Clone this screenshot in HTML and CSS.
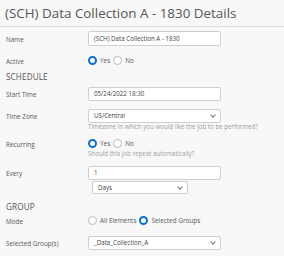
FILE: index.html
```html
<!DOCTYPE html>
<html lang="en">
<head>
  <meta charset="UTF-8">
  <title>(SCH) Data Collection A - 1830 Details</title>
  <link rel="stylesheet" href="styles.css">
</head>
<body>
  <div class="header">(SCH) Data Collection A - 1830 Details</div>

  <div class="form">
    <div class="row row-name">
      <label>Name</label>
      <div class="input">(SCH) Data Collection A - 1830</div>
    </div>

    <div class="row row-radio row-active">
      <label>Active</label>
      <div class="radios">
        <span class="radio on"></span><span class="opt">Yes</span>
        <span class="radio"></span><span class="opt">No</span>
      </div>
    </div>

    <div class="section section-schedule">SCHEDULE</div>

    <div class="row row-start">
      <label>Start Time</label>
      <div class="input">05/24/2022 18:30</div>
    </div>

    <div class="row row-zone">
      <label>Time Zone</label>
      <div class="input select">US/Central<span class="chev"></span></div>
    </div>
    <div class="help">Timezone in which you would like the job to be performed?</div>

    <div class="row row-radio row-recur">
      <label>Recurring</label>
      <div class="radios">
        <span class="radio on"></span><span class="opt">Yes</span>
        <span class="radio"></span><span class="opt">No</span>
      </div>
    </div>
    <div class="help help-recur">Should this job repeat automatically?</div>

    <div class="row row-every">
      <label>Every</label>
      <div class="input">1</div>
    </div>
    <div class="days-wrap">
      <div class="input select days">Days<span class="chev"></span></div>
    </div>

    <div class="section section-group">GROUP</div>

    <div class="row row-radio row-mode">
      <label>Mode</label>
      <div class="radios">
        <span class="radio"></span><span class="opt">All Elements</span>
        <span class="radio on"></span><span class="opt">Selected Groups</span>
      </div>
    </div>

    <div class="row row-groups">
      <label>Selected Group(s)</label>
      <div class="input select">_Data_Collection_A<span class="chev"></span></div>
    </div>
  </div>
</body>
</html>
```

FILE: styles.css
```css
body {
  margin: 0;
  background: #f8f8f8;
  font-family: "Open Sans", "Noto Sans", sans-serif;
  color: #555;
  overflow: hidden;
}

.header {
  height: 27px;
  box-sizing: border-box;
  padding: 3px 0 0 5px;
  font-size: 13.4px;
  line-height: 20px;
  color: #555;
  border-bottom: 1px solid #dcdcdc;
}

.form {
  padding: 0 6px;
}

.row {
  display: grid;
  grid-template-columns: 82px 133px;
  align-items: center;
}

.row label {
  font-size: 6.4px;
  color: #555;
  padding-top: 1px;
}

.row-radio {
  grid-template-rows: 10px;
}

.row-radio label {
  align-self: start;
  line-height: 10px;
  margin-top: 2px;
  padding-top: 0;
}

.input {
  position: relative;
  height: 14px;
  box-sizing: border-box;
  background: #fff;
  border: 1px solid #cfcfcf;
  border-radius: 2px;
  font-size: 6.2px;
  line-height: 12px;
  padding: 0 5px;
  color: #444;
}

.chev {
  position: absolute;
  right: 5px;
  top: 3px;
  width: 3px;
  height: 3px;
  border-right: 1px solid #777;
  border-bottom: 1px solid #777;
  transform: rotate(45deg);
}

.radios {
  display: flex;
  align-items: center;
  height: 10px;
  font-size: 6.4px;
  color: #555;
}

.radio {
  width: 9px;
  height: 9px;
  box-sizing: border-box;
  border-radius: 50%;
  border: 1px solid #b9b9b9;
  background: #fff;
}

.radio.on {
  border: 2.5px solid #0b6fd1;
}

.opt {
  margin: 0 3px 0 3px;
}

.section {
  font-size: 8.2px;
  line-height: 12px;
  color: #555;
  letter-spacing: 0.1px;
}

.help {
  margin-left: 82px;
  font-size: 6.2px;
  line-height: 8px;
  color: #a0a0a0;
}

.row-name { margin-top: 4px; }
.row-name .input { height: 15px; line-height: 13px; }
.row-active { margin-top: 9px; }
.section-schedule { margin-top: 6px; }
.row-start { margin-top: 4px; }
.row-zone { margin-top: 8px; }
.row-recur { margin-top: 7px; }
.help-recur { margin-top: 2px; }
.row-every { margin-top: 8px; }

.days-wrap {
  margin: 1px 0 0 86px;
}

.days {
  width: 96px;
  height: 13px;
  line-height: 11px;
  border-radius: 1px;
}

.section-group { margin-top: 7px; }
.row-mode { margin-top: 2px; }
.row-groups { margin-top: 11px; }
```
